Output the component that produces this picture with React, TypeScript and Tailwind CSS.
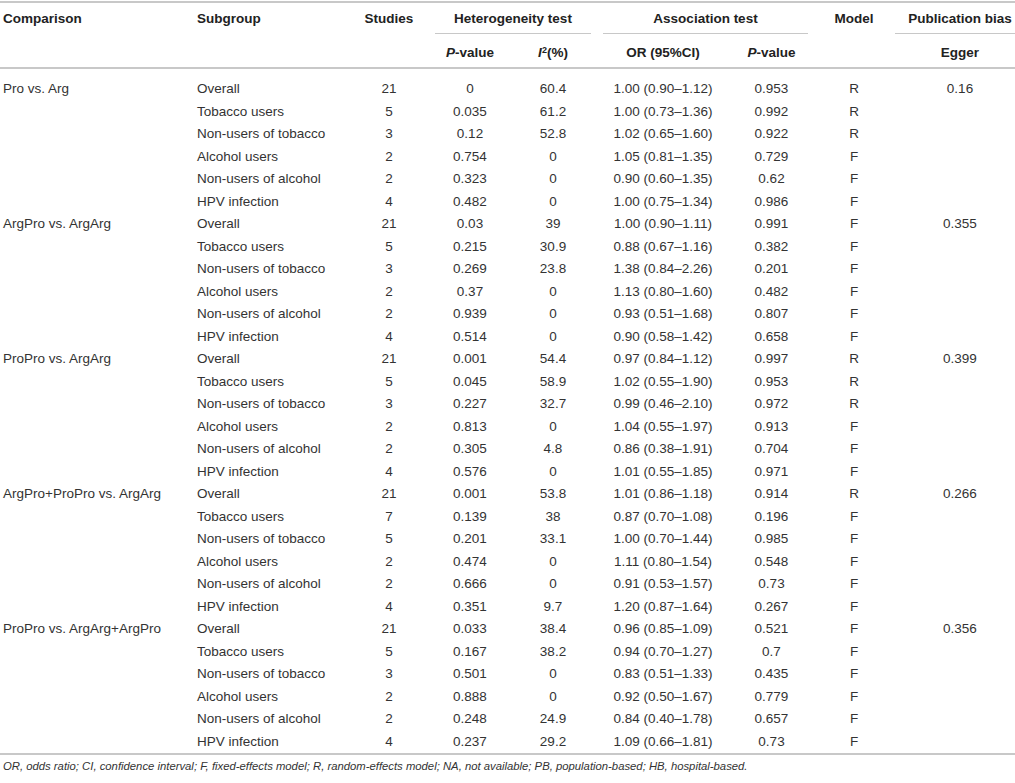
import React from 'react';

type Row = [string, string, string, string, string, string, string, string];

const groups: { comparison: string; rows: Row[] }[] = [
  {
    comparison: 'Pro vs. Arg',
    rows: [
      ['Overall', '21', '0', '60.4', '1.00 (0.90–1.12)', '0.953', 'R', '0.16'],
      ['Tobacco users', '5', '0.035', '61.2', '1.00 (0.73–1.36)', '0.992', 'R', ''],
      ['Non-users of tobacco', '3', '0.12', '52.8', '1.02 (0.65–1.60)', '0.922', 'R', ''],
      ['Alcohol users', '2', '0.754', '0', '1.05 (0.81–1.35)', '0.729', 'F', ''],
      ['Non-users of alcohol', '2', '0.323', '0', '0.90 (0.60–1.35)', '0.62', 'F', ''],
      ['HPV infection', '4', '0.482', '0', '1.00 (0.75–1.34)', '0.986', 'F', ''],
    ],
  },
  {
    comparison: 'ArgPro vs. ArgArg',
    rows: [
      ['Overall', '21', '0.03', '39', '1.00 (0.90–1.11)', '0.991', 'F', '0.355'],
      ['Tobacco users', '5', '0.215', '30.9', '0.88 (0.67–1.16)', '0.382', 'F', ''],
      ['Non-users of tobacco', '3', '0.269', '23.8', '1.38 (0.84–2.26)', '0.201', 'F', ''],
      ['Alcohol users', '2', '0.37', '0', '1.13 (0.80–1.60)', '0.482', 'F', ''],
      ['Non-users of alcohol', '2', '0.939', '0', '0.93 (0.51–1.68)', '0.807', 'F', ''],
      ['HPV infection', '4', '0.514', '0', '0.90 (0.58–1.42)', '0.658', 'F', ''],
    ],
  },
  {
    comparison: 'ProPro vs. ArgArg',
    rows: [
      ['Overall', '21', '0.001', '54.4', '0.97 (0.84–1.12)', '0.997', 'R', '0.399'],
      ['Tobacco users', '5', '0.045', '58.9', '1.02 (0.55–1.90)', '0.953', 'R', ''],
      ['Non-users of tobacco', '3', '0.227', '32.7', '0.99 (0.46–2.10)', '0.972', 'R', ''],
      ['Alcohol users', '2', '0.813', '0', '1.04 (0.55–1.97)', '0.913', 'F', ''],
      ['Non-users of alcohol', '2', '0.305', '4.8', '0.86 (0.38–1.91)', '0.704', 'F', ''],
      ['HPV infection', '4', '0.576', '0', '1.01 (0.55–1.85)', '0.971', 'F', ''],
    ],
  },
  {
    comparison: 'ArgPro+ProPro vs. ArgArg',
    rows: [
      ['Overall', '21', '0.001', '53.8', '1.01 (0.86–1.18)', '0.914', 'R', '0.266'],
      ['Tobacco users', '7', '0.139', '38', '0.87 (0.70–1.08)', '0.196', 'F', ''],
      ['Non-users of tobacco', '5', '0.201', '33.1', '1.00 (0.70–1.44)', '0.985', 'F', ''],
      ['Alcohol users', '2', '0.474', '0', '1.11 (0.80–1.54)', '0.548', 'F', ''],
      ['Non-users of alcohol', '2', '0.666', '0', '0.91 (0.53–1.57)', '0.73', 'F', ''],
      ['HPV infection', '4', '0.351', '9.7', '1.20 (0.87–1.64)', '0.267', 'F', ''],
    ],
  },
  {
    comparison: 'ProPro vs. ArgArg+ArgPro',
    rows: [
      ['Overall', '21', '0.033', '38.4', '0.96 (0.85–1.09)', '0.521', 'F', '0.356'],
      ['Tobacco users', '5', '0.167', '38.2', '0.94 (0.70–1.27)', '0.7', 'F', ''],
      ['Non-users of tobacco', '3', '0.501', '0', '0.83 (0.51–1.33)', '0.435', 'F', ''],
      ['Alcohol users', '2', '0.888', '0', '0.92 (0.50–1.67)', '0.779', 'F', ''],
      ['Non-users of alcohol', '2', '0.248', '24.9', '0.84 (0.40–1.78)', '0.657', 'F', ''],
      ['HPV infection', '4', '0.237', '29.2', '1.09 (0.66–1.81)', '0.73', 'F', ''],
    ],
  },
];

const cols = 'grid grid-cols-[194px_154px_82px_80px_86px_134px_83px_82px_130px]';

export default function App() {
  return (
    <div className="w-[1015px] h-[783px] overflow-hidden bg-white text-[13.5px] text-[#333] font-['Liberation_Sans',Arial,sans-serif]">
      <div className="w-[1025px] mt-[1px] border-t-2 border-[#c8c8c8]">
        {/* header row 1 */}
        <div className={`${cols} h-[31px] font-bold text-[#222] leading-[15px]`}>
          <div className="pt-[8px] pl-[3px]">Comparison</div>
          <div className="pt-[8px] pl-[3px]">Subgroup</div>
          <div className="pt-[8px] text-center">Studies</div>
          <div className="col-span-2 pl-[5px] pr-[5px]">
            <div className="h-full pt-[8px] text-center border-b border-[#c8c8c8]">Heterogeneity test</div>
          </div>
          <div className="col-span-2 pl-[7px] pr-[5px]">
            <div className="h-full pt-[8px] text-center border-b border-[#c8c8c8]">Association test</div>
          </div>
          <div className="pt-[8px] text-center">Model</div>
          <div>
            <div className="h-full pt-[8px] text-center border-b border-[#c8c8c8] whitespace-nowrap">Publication bias</div>
          </div>
        </div>
        {/* header row 2 */}
        <div className={`${cols} h-[35px] pt-[11px] font-bold text-[#222] leading-[15px] border-b-2 border-[#c8c8c8]`}>
          <div />
          <div />
          <div />
          <div className="text-center">
            <i>P</i>-value
          </div>
          <div className="text-center">
            <i>I</i>
            <sup className="text-[9px]">2</sup>(%)
          </div>
          <div className="text-center">OR (95%CI)</div>
          <div className="text-center">
            <i>P</i>-value
          </div>
          <div />
          <div className="text-center">Egger</div>
        </div>
        {/* body */}
        <div className="pt-[9px] border-b-2 border-[#c8c8c8]">
          {groups.map((g) =>
            g.rows.map((r, i) => (
              <div key={g.comparison + r[0]} className={`${cols} h-[22.5px] leading-[22.5px]`}>
                <div className="pl-[3px] whitespace-nowrap">{i === 0 ? g.comparison : ''}</div>
                <div className="pl-[3px] whitespace-nowrap">{r[0]}</div>
                <div className="text-center">{r[1]}</div>
                <div className="text-center">{r[2]}</div>
                <div className="text-center">{r[3]}</div>
                <div className="text-center">{r[4]}</div>
                <div className="text-center">{r[5]}</div>
                <div className="text-center">{r[6]}</div>
                <div className="text-center">{r[7]}</div>
              </div>
            ))
          )}
        </div>
        <p className="pt-[4px] pl-[3px] text-[11.3px] leading-[15px] italic text-[#333] whitespace-nowrap">
          OR, odds ratio; CI, confidence interval; F, fixed-effects model; R, random-effects model; NA, not available; PB,
          population-based; HB, hospital-based.
        </p>
      </div>
    </div>
  );
}
